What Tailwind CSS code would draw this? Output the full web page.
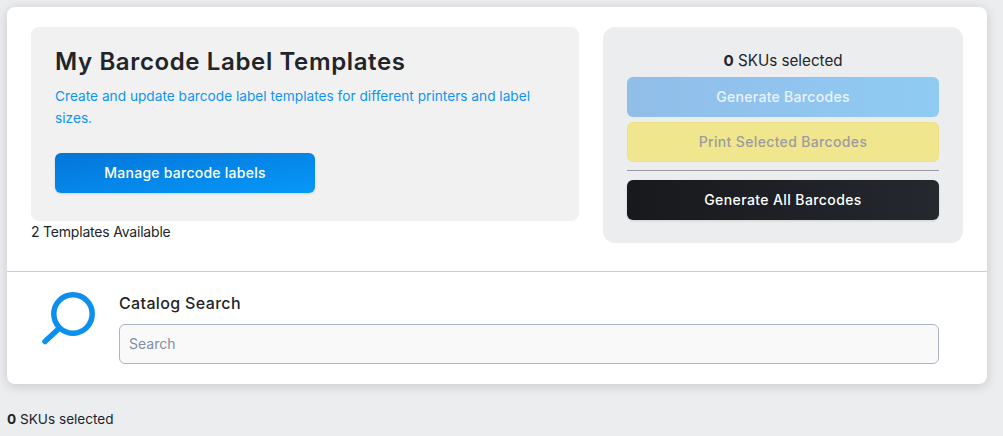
<!DOCTYPE html>
<html>
<head>
  <script src="https://cdn.jsdelivr.net/npm/@tailwindcss/browser@4"></script>
</head>
<body class="h-[436px] overflow-hidden bg-[#ecedef] font-['Inter',sans-serif] text-[#212529]">
  <div class="p-[7px] pb-0 w-[994px]">
    <div class="h-[377px] bg-white rounded-lg shadow-[0_2px_12px_rgba(0,0,0,0.16)]">
      <!-- top panels -->
      <div class="flex gap-6 px-6 pt-5 h-[265px] border-b border-[#c9ccd3]">
        <div class="w-[548px]">
          <div class="h-[194px] bg-[#f1f1f2] rounded-lg px-6 pt-[20px]">
            <h1 class="text-[24px] leading-[30px] font-semibold tracking-[0.63px]">My Barcode Label Templates</h1>
            <p class="mt-[8px] text-[13.7px] leading-[22px] text-[#0d95f0] w-[490px]">Create and update barcode label templates for different printers and label sizes.</p>
            <button class="mt-[24px] w-[260px] h-10 pb-[1px] rounded-md bg-gradient-to-br from-[#0475d9] to-[#0798f8] text-white text-[14px] font-medium shadow-sm tracking-[0.25px]">Manage barcode labels</button>
          </div>
          <p class="mt-[1px] text-[14px] leading-[20px] tracking-[-0.2px]">2 Templates Available</p>
        </div>
        <div class="w-[360px] h-[216px] bg-[#ecedef] rounded-xl px-6 pt-[23px]">
          <p class="text-center text-[15.2px] leading-[22px] mb-[5px]"><span class="font-bold">0</span> SKUs selected</p>
          <div class="flex flex-col gap-[5px]">
            <button class="h-10 pb-[2px] rounded-md bg-gradient-to-r from-[#91bde9] to-[#8fcbf3] text-white/80 text-[14px] font-medium tracking-[0.3px]">Generate Barcodes</button>
            <button class="h-10 pb-[2px] rounded-md border border-[#ece08a] bg-[#f0e68e] text-[#9c9ca0] text-[14px] font-medium tracking-[0.35px]">Print Selected Barcodes</button>
          </div>
          <hr class="mt-2 mb-[9px] border-[#9a9ba0]">
          <button class="w-full h-10 pb-[2px] rounded-md bg-gradient-to-r from-[#17191d] to-[#25282d] text-white text-[14px] font-medium shadow-sm tracking-[0.4px]">Generate All Barcodes</button>
        </div>
      </div>
      <!-- search -->
      <div class="flex px-[34px] pt-[20px]">
        <svg class="w-[56px] h-[56px] mr-[22px]" viewBox="0 0 56 56" fill="none" stroke="#0d8fee" stroke-width="5.5" stroke-linecap="round">
          <circle cx="32" cy="22" r="19.2"></circle>
          <path d="M18.5 36 L4 49.5"></path>
        </svg>
        <div class="w-[820px]">
          <label class="block text-[16px] leading-[22px] font-medium tracking-[0.35px]">Catalog Search</label>
          <input class="mt-[10px] w-full h-10 pb-[2px] rounded-md border border-[#aab4c4] bg-[#f9f9f9] px-[9px] text-[14px] placeholder:text-[#7f8ea3]" placeholder="Search">
        </div>
      </div>
    </div>
    <p class="mt-[26px] text-[13.6px] leading-[18px]"><span class="font-bold">0</span> SKUs selected</p>
  </div>
</body>
</html>
